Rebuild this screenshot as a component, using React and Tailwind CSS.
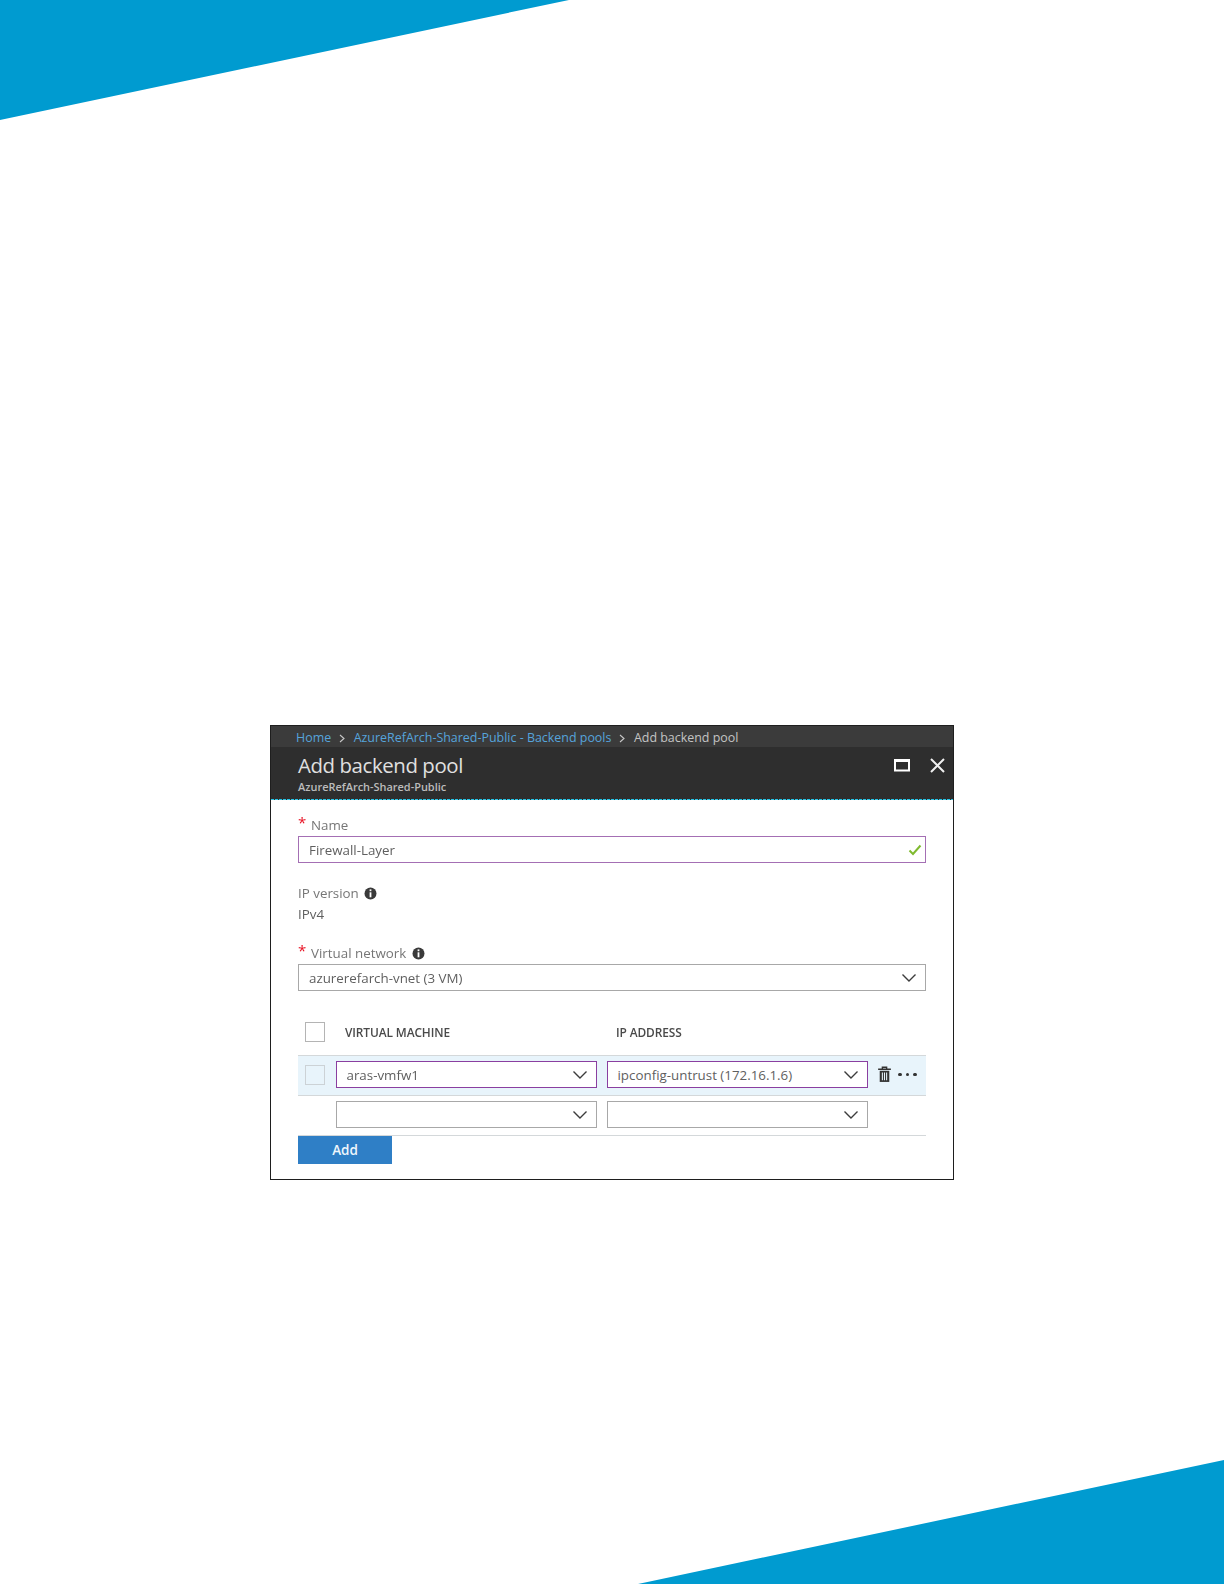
import React from 'react';

const Chevron = ({ className = '' }) => (
  <svg width="16" height="10" viewBox="0 0 16 10" className={className}>
    <path d="M1.5 1.5 L8 8 L14.5 1.5" fill="none" stroke="#3c3c3c" strokeWidth="1.4" />
  </svg>
);

const Crumb = () => (
  <svg width="6" height="9" viewBox="0 0 6 9" className="ml-[8px] mr-[8.5px] shrink-0">
    <path d="M1 1 L5 4.5 L1 8" fill="none" stroke="#c8c8c8" strokeWidth="1.1" />
  </svg>
);

const Info = () => (
  <svg width="13" height="13" viewBox="0 0 13 13" className="shrink-0">
    <circle cx="6.5" cy="6.5" r="6" fill="#3a3a3a" />
    <rect x="5.6" y="2.4" width="1.8" height="1.8" fill="#fff" />
    <rect x="5.6" y="5.3" width="1.8" height="5" fill="#fff" />
  </svg>
);

const Star = () => (
  <span className="w-[13px] h-5 text-[#e81123] text-[15px] leading-[14px] self-start">*</span>
);

const Select = ({ value, active }) => (
  <div
    className={`w-[261px] h-[27px] bg-white border flex items-center justify-between pl-[9.5px] pr-2 ${
      active ? 'border-[#8a3fa0]' : 'border-[#a8a8a8]'
    }`}
  >
    <span className="text-[#5f5f5f] pt-[1px]">{value}</span>
    <Chevron />
  </div>
);

const Checkbox = ({ className = 'border-[#b4b4b4]' }) => (
  <div className={`w-5 h-5 border shrink-0 ${className}`} />
);

export default function App() {
  return (
    <div className="h-[1584px] bg-white flex flex-col font-['Open_Sans',sans-serif] text-[13.35px] overflow-hidden">
      <svg width="1224" height="121" viewBox="0 0 1224 121" className="block shrink-0">
        <polygon points="0,0 569,0 0,120" fill="#009bd0" />
      </svg>

      <div className="w-[684px] h-[455px] ml-[270px] mt-[604px] shrink-0 border border-[#1e1e1e] flex flex-col blur-[0.35px]">
        <div className="h-[21px] bg-[#3b3b3b] flex items-center pl-[25px] pt-[3px] text-[12.45px] shrink-0">
          <span className="text-[#56a4dc]">Home</span>
          <Crumb />
          <span className="text-[#56a4dc]">AzureRefArch-Shared-Public - Backend pools</span>
          <Crumb />
          <span className="text-[#c4c4c4]">Add backend pool</span>
        </div>
        <div className="h-[52px] bg-[#2e2e2e] flex justify-between pl-[27px] pr-[8px] shrink-0">
          <div>
            <div className="text-[20.4px] leading-[28px] text-[#e0e0e0] tracking-[-0.4px] mt-[4px]">Add backend pool</div>
            <div className="text-[10.95px] leading-[15px] text-[#bcbcbc] font-semibold">AzureRefArch-Shared-Public</div>
          </div>
          <div className="flex items-start gap-[20px] pt-[11px]">
            <svg width="16" height="14" viewBox="0 0 16 14">
              <rect x="1" y="2" width="14" height="10.5" fill="none" stroke="#fff" strokeWidth="2" />
              <rect x="0" y="1" width="16" height="3" fill="#fff" />
            </svg>
            <svg width="15" height="15" viewBox="0 0 15 15">
              <path d="M1 1 L14 14 M14 1 L1 14" stroke="#f0f0f0" strokeWidth="2" />
            </svg>
          </div>
        </div>
        <div className="h-px shrink-0 bg-[repeating-linear-gradient(90deg,#29c5e6_0,#29c5e6_3px,#2e2e2e_3px,#2e2e2e_4px)]" />

        <div className="flex-1 flex flex-col px-[27px]">
          <div className="h-5 mt-[15px] flex items-center">
            <Star />
            <span className="text-[#767676]">Name</span>
          </div>
          <div className="h-[27px] mt-px border border-[#a46fb4] flex items-center justify-between pl-[10px] pr-[3px]">
            <span className="text-[#5f5f5f] pt-[1px]">Firewall-Layer</span>
            <svg width="14" height="12" viewBox="0 0 14 12">
              <path d="M1.5 6.5 L5 10 L12.5 1.5" fill="none" stroke="#7fba2f" strokeWidth="2" />
            </svg>
          </div>

          <div className="h-5 mt-5 flex items-center gap-[5px]">
            <span className="text-[#767676]">IP version</span>
            <Info />
          </div>
          <div className="h-5 mt-[1px] mb-[1px] flex items-center text-[#5f5f5f]">IPv4</div>

          <div className="h-5 mt-[18px] flex items-center">
            <Star />
            <span className="text-[#767676] mr-[6px]">Virtual network</span>
            <Info />
          </div>
          <div className="h-[27px] mt-px border border-[#a8a8a8] flex items-center justify-between pl-[10px] pr-[8px]">
            <span className="text-[#5f5f5f] pt-[1px]">azurerefarch-vnet (3 VM)</span>
            <Chevron />
          </div>

          <div className="h-5 mt-[31px] flex items-center pl-[7px]">
            <Checkbox />
            <span className="w-[271px] ml-[20px] pt-[1px] text-[11.9px] font-semibold text-[#4a4a4a] tracking-[-0.1px]">VIRTUAL MACHINE</span>
            <span className="pt-[1px] text-[11.9px] font-semibold text-[#4a4a4a] tracking-[-0.1px]">IP ADDRESS</span>
          </div>

          <div className="h-[41px] mt-[13px] pb-[2px] bg-[#e8f4fb] border-y border-[#d4d8da] flex items-center pl-[7px]">
            <Checkbox className="border-[#ccd2d6]" />
            <div className="flex gap-[10px] ml-[11px]">
              <Select value="aras-vmfw1" active />
              <Select value="ipconfig-untrust (172.16.1.6)" active />
            </div>
            <svg width="15" height="17" viewBox="0 0 14 16" className="ml-[9px]">
              <path d="M1 3 H13 M5 3 V1.2 H9 V3" fill="none" stroke="#333" strokeWidth="1.3" />
              <path d="M2.5 4.5 H11.5 V15 H2.5 Z" fill="#333" />
              <path d="M5 6 V13.5 M7 6 V13.5 M9 6 V13.5" stroke="#e8f4fb" strokeWidth="1" />
            </svg>
            <div className="flex gap-[4px] ml-[6px]">
              <span className="w-[3.5px] h-[3.5px] rounded-full bg-[#333]" />
              <span className="w-[3.5px] h-[3.5px] rounded-full bg-[#333]" />
              <span className="w-[3.5px] h-[3.5px] rounded-full bg-[#333]" />
            </div>
          </div>

          <div className="h-[40px] pb-[2px] border-b border-[#d4d8da] flex items-center pl-[38px] gap-[10px]">
            <Select value="" />
            <Select value="" />
          </div>

          <button className="w-[94px] h-[28px] pt-[1px] bg-[#2f7fc6] text-[#eef6fc] font-semibold text-[13.5px]">Add</button>
        </div>
      </div>

      <svg width="1224" height="124" viewBox="0 0 1224 124" className="block shrink-0 mt-auto">
        <polygon points="1224,0 1224,124 638,124" fill="#009bd0" />
      </svg>
    </div>
  );
}
